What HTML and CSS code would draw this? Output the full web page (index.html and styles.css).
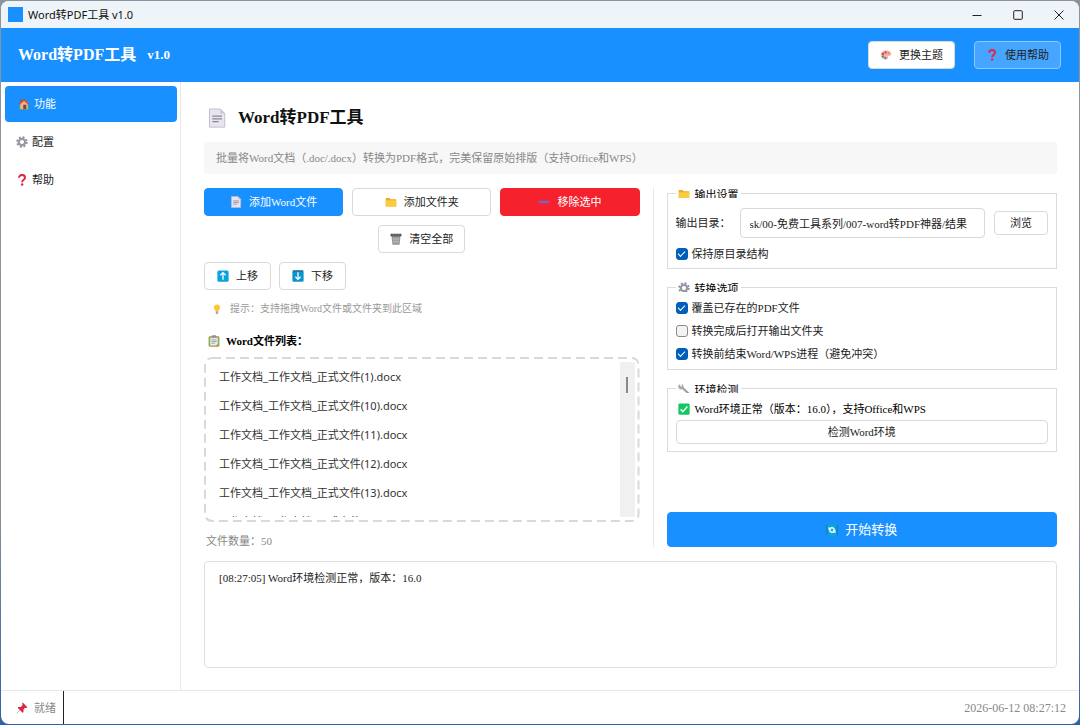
FILE: index.html
```
<!DOCTYPE html>
<html lang="zh-CN">
<head>
    <meta charset="UTF-8">
    <meta name="viewport" content="width=device-width, initial-scale=1.0">
    <link rel="stylesheet" href="styles.css">
    <title>Word转PDF工具 v1.0</title>
</head>
<body>
    <!-- icon sprite -->
    <svg class="sprite" aria-hidden="true">
      <symbol id="i-home" viewBox="0 0 16 16">
        <path d="M2 9h12v6H2z" fill="#6fae3c"/>
        <path d="M3 6l5-4 5 4v9H3z" fill="#e8b48a"/>
        <path d="M8 1L1 8l1 1 6-5 6 5 1-1z" fill="#d9472b"/>
        <path d="M3 2h2v4H3z" fill="#a8502f"/>
        <path d="M7 9h4v6H7z" fill="#7a4a34"/>
      </symbol>
      <symbol id="i-gear" viewBox="0 0 16 16">
        <circle cx="8" cy="8" r="6.4" fill="none" stroke="#8d8f9b" stroke-width="2.4" stroke-dasharray="2.6 2.43"/>
        <circle cx="8" cy="8" r="4.2" fill="none" stroke="#9799a6" stroke-width="3"/>
      </symbol>
      <symbol id="i-question" viewBox="0 0 16 16">
        <path d="M4 5c0-5 8-5 8 0 0 3-3.800 2.500-3.800 6" fill="none" stroke="#e5253d" stroke-width="2.600"/>
        <circle cx="8.200" cy="14" r="1.600" fill="#e5253d"/>
      </symbol>
      <symbol id="i-palette" viewBox="0 0 16 16">
        <path d="M8 2c5 0 7.500 3 7 5.500-.5 2-4 .5-4.500 2.500-.3 2 1 4-2.500 4C4 14 1 11.500 1 8s3-6 7-6z" fill="#f3b3a4"/>
        <circle cx="4" cy="6.500" r="1.500" fill="#e5253d"/>
        <circle cx="4" cy="10" r="1.500" fill="#3a9b6c"/>
        <circle cx="7.500" cy="4.500" r="1.500" fill="#b0408c"/>
        <circle cx="7" cy="12" r="1.400" fill="#3f6fd0"/>
        <circle cx="11.500" cy="5.500" r="1.400" fill="#f0894b"/>
      </symbol>
      <symbol id="i-doc" viewBox="0 0 16 16">
        <path d="M2 .8h8.700l3.500 3.500v11H2z" fill="#e9e5f0" stroke="#c5bfce" stroke-width=".8"/>
        <path d="M10.700 .8v3.500h3.500z" fill="#c9c3d4"/>
        <path d="M4.300 6.500h7.700M4.300 8.700h7.700M4.300 10.900h5" stroke="#8c8598" stroke-width="1"/>
      </symbol>
      <symbol id="i-folder" viewBox="0 0 16 16">
        <path d="M1 2.500h5l1.500 1.700H15V14H1z" fill="#eda91f"/>
        <path d="M1 5.500h14V14H1z" fill="#fccb40"/>
      </symbol>
      <symbol id="i-minus" viewBox="0 0 16 16">
        <path d="M1 6.200h14v3.600H1z" fill="#7d62c4"/>
      </symbol>
      <symbol id="i-trash" viewBox="0 0 16 16">
        <path d="M2 4h12l-1.300 11.500H3.300z" fill="#8f8f8f"/>
        <path d="M5 5l.5 9.500M8 5v9.500M11 5l-.5 9.500M3 8h10M3.500 11.500h9" stroke="#c9c9c9" stroke-width=".8"/>
        <path d="M.8 1h14.400v3.200H.8z" fill="#4c4c4c"/>
        <path d="M2.500 2.500h11" stroke="#a0a0a0" stroke-width=".8"/>
      </symbol>
      <symbol id="i-up" viewBox="0 0 16 16">
        <rect x=".5" y=".5" width="15" height="15" rx="2" fill="#0ba3dd"/>
        <path d="M8 13V4M4.500 7L8 3.500 11.500 7" fill="none" stroke="#fff" stroke-width="1.700"/>
      </symbol>
      <symbol id="i-down" viewBox="0 0 16 16">
        <rect x=".5" y=".5" width="15" height="15" rx="2" fill="#0b95d0"/>
        <path d="M1 .5h14v1.500H1z" fill="#35617a"/>
        <path d="M8 3v9M4.500 9L8 12.500 11.500 9" fill="none" stroke="#fff" stroke-width="1.700"/>
      </symbol>
      <symbol id="i-bulb" viewBox="0 0 16 16">
        <path d="M8 2c2.600 0 4.200 1.800 4.200 4S10.200 9 10 11H6C5.800 9 3.800 8.200 3.800 6S5.400 2 8 2z" fill="#fbc92f"/>
        <path d="M6.300 11h3.400v3L8 15l-1.700-1z" fill="#a9a5b0"/>
      </symbol>
      <symbol id="i-clipboard" viewBox="0 0 16 16">
        <rect x="1" y="1.500" width="14" height="14" rx="1.500" fill="#c08a4a"/>
        <path d="M1 3v11.500h1.500V3zM13.500 3v11.500H15V3z" fill="#7cba4d"/>
        <path d="M3 3.500h10v8.500L10.500 14H3z" fill="#e8eef0"/>
        <path d="M4.500 6.500h7M4.500 8.700h7M4.500 11h5" stroke="#6d9aa0" stroke-width="1"/>
        <rect x="5" y=".3" width="6" height="3" rx="1" fill="#8a8f96"/>
      </symbol>
      <symbol id="i-wrench" viewBox="0 0 16 16">
        <path d="M5.500 6l8.500 8" stroke="#9c9ca6" stroke-width="2.800" stroke-linecap="round"/>
        <path d="M2 1.500a3.800 3.800 0 1 0 5.500 4.700C8 4 6.500 1.500 4.500 1.300L5.500 4 4 5z" fill="#a9a9b3"/>
      </symbol>
      <symbol id="i-check" viewBox="0 0 16 16">
        <rect x=".5" y=".5" width="15" height="15" rx="1.500" fill="#10c95e"/>
        <path d="M3.500 8.500l3 3L12.500 4.800" fill="none" stroke="#fff" stroke-width="1.900"/>
      </symbol>
      <symbol id="i-refresh" viewBox="0 0 16 16">
        <rect x=".5" y=".5" width="15" height="15" rx="1.500" fill="#08a7d8"/>
        <path d="M.5 1h1.300v14H.5zM14.200 1h1.300v14h-1.300z" fill="#2470a8"/>
        <path d="M4.800 6.500c1.500-2.500 6-2 6.400 1.500M11.200 9.500c-1.500 2.500-6 2-6.400-1.500" fill="none" stroke="#fff" stroke-width="1.900"/>
        <path d="M3.300 3.500v4.300h4.200zM12.700 12.500V8.200H8.500z" fill="#fff"/>
      </symbol>
      <symbol id="i-pin" viewBox="0 0 16 16">
        <path d="M6 10l-5 5" stroke="#b7b9c4" stroke-width="1.300"/>
        <path d="M9 .8l6.200 6.200-1.500 1-1.700-.5-2 2.500v3.500l-1.200.8L2.200 7.700 3 6.500h3.500L8.800 4 8.200 2z" fill="#e0243f"/>
      </symbol>
    </svg>

    <div class="window">
      <div class="titlebar">
        <span class="titlebar-logo"></span>
        <span class="titlebar-text">Word转PDF工具 v1.0</span>
        <div class="titlebar-controls">
          <button class="win-btn" type="button" aria-label="最小化">
            <svg viewBox="0 0 10 10"><path d="M.5 5.500h9"/></svg>
          </button>
          <button class="win-btn" type="button" aria-label="最大化">
            <svg viewBox="0 0 10 10"><rect x=".7" y=".7" width="8.600" height="8.600" rx="1"/></svg>
          </button>
          <button class="win-btn" type="button" aria-label="关闭">
            <svg viewBox="0 0 10 10"><path d="M.5 .5l9 9M9.500 .5l-9 9"/></svg>
          </button>
        </div>
      </div>

      <header class="header">
        <span class="header-title">Word转PDF工具</span>
        <span class="header-version">v1.0</span>
        <div class="header-actions">
          <button class="btn btn-fixed" type="button"><svg class="icon"><use href="#i-palette"/></svg>更换主题</button>
          <button class="btn btn-fixed btn-ghost" type="button"><svg class="icon"><use href="#i-question"/></svg>使用帮助</button>
        </div>
      </header>

      <div class="body">
        <nav class="sidebar">
          <a class="nav-item active" href="#"><svg class="icon"><use href="#i-home"/></svg>功能</a>
          <a class="nav-item" href="#"><svg class="icon"><use href="#i-gear"/></svg>配置</a>
          <a class="nav-item" href="#"><svg class="icon"><use href="#i-question"/></svg>帮助</a>
        </nav>

        <main class="main">
          <h1 class="page-title"><svg class="icon icon-lg"><use href="#i-doc"/></svg>Word转PDF工具</h1>
          <p class="page-desc">批量将Word文档（.doc/.docx）转换为PDF格式，完美保留原始排版（支持Office和WPS）</p>

          <div class="workspace">
            <section class="files">
              <div class="toolbar">
                <button class="btn btn-primary" type="button"><svg class="icon"><use href="#i-doc"/></svg>添加Word文件</button>
                <button class="btn" type="button"><svg class="icon"><use href="#i-folder"/></svg>添加文件夹</button>
                <button class="btn btn-danger" type="button"><svg class="icon"><use href="#i-minus"/></svg>移除选中</button>
              </div>
              <div class="toolbar-center">
                <button class="btn btn-fixed" type="button"><svg class="icon"><use href="#i-trash"/></svg>清空全部</button>
              </div>
              <div class="toolbar-move">
                <button class="btn" type="button"><svg class="icon"><use href="#i-up"/></svg>上移</button>
                <button class="btn" type="button"><svg class="icon"><use href="#i-down"/></svg>下移</button>
              </div>
              <p class="tip"><svg class="icon"><use href="#i-bulb"/></svg>提示：支持拖拽Word文件或文件夹到此区域</p>
              <h2 class="list-title"><svg class="icon"><use href="#i-clipboard"/></svg>Word文件列表：</h2>
              <div class="file-box">
                <svg class="file-box-frame" aria-hidden="true"><rect x="1" y="1" rx="7"/></svg>
                <ul class="file-list">
                  <li>工作文档_工作文档_正式文件(1).docx</li>
                  <li>工作文档_工作文档_正式文件(10).docx</li>
                  <li>工作文档_工作文档_正式文件(11).docx</li>
                  <li>工作文档_工作文档_正式文件(12).docx</li>
                  <li>工作文档_工作文档_正式文件(13).docx</li>
                  <li>工作文档_工作文档_正式文件(14).docx</li>
                </ul>
                <div class="scroll-track"><div class="scroll-thumb"></div></div>
              </div>
              <p class="file-count">文件数量：50</p>
            </section>

            <div class="divider"></div>

            <section class="settings">
              <fieldset class="group group-output">
                <legend><svg class="icon"><use href="#i-folder"/></svg>输出设置</legend>
                <div class="output-row">
                  <label for="output-dir">输出目录：</label>
                  <input class="text-input" id="output-dir" type="text" value="sk/00-免费工具系列/007-word转PDF神器/结果">
                  <button class="btn btn-small" type="button">浏览</button>
                </div>
                <label class="check"><input type="checkbox" checked>保持原目录结构</label>
              </fieldset>

              <fieldset class="group">
                <legend><svg class="icon"><use href="#i-gear"/></svg>转换选项</legend>
                <label class="check"><input type="checkbox" checked>覆盖已存在的PDF文件</label>
                <label class="check"><input type="checkbox">转换完成后打开输出文件夹</label>
                <label class="check"><input type="checkbox" checked>转换前结束Word/WPS进程（避免冲突）</label>
              </fieldset>

              <fieldset class="group group-env">
                <legend><svg class="icon"><use href="#i-wrench"/></svg>环境检测</legend>
                <p class="env-status"><svg class="icon"><use href="#i-check"/></svg>Word环境正常（版本：16.0），支持Office和WPS</p>
                <button class="btn btn-small" type="button">检测Word环境</button>
              </fieldset>

              <button class="btn btn-primary btn-start" type="button"><svg class="icon"><use href="#i-refresh"/></svg>开始转换</button>
            </section>
          </div>

          <textarea class="log" aria-label="日志" readonly>[08:27:05] Word环境检测正常，版本：16.0</textarea>
        </main>
      </div>

      <footer class="statusbar">
        <span class="status"><svg class="icon"><use href="#i-pin"/></svg>就绪</span>
        <time class="clock">2026-06-12 08:27:12</time>
      </footer>
    </div>
</body>
</html>
```

FILE: styles.css
```
* {
  box-sizing: border-box;
}
html,body {
  height: 100%;
  margin: 0;
  padding: 0;
}
body {
  padding: 1px;
  background: linear-gradient(#8a94a0 0%, #8a9098 70%, #2f62a8 100%);
  color: #222;
  font-family: "Liberation Serif", "Noto Sans CJK SC", serif;
  font-size: 11px;
  line-height: 16px;
}
h1,h2,p,ul {
  margin: 0;
  padding: 0;
}
button,input,textarea {
  font: inherit;
  color: inherit;
}
.sprite {
  display: none;
}
.icon {
  flex: none;
  width: 12px;
  height: 12px;
}
.icon-lg {
  width: 20px;
  height: 20px;
}

.window {
  display: flex;
  flex-direction: column;
  height: 100%;
  border-radius: 8px;
  background-color: #fff;
  overflow: hidden;
}

/* title bar */
.titlebar {
  display: flex;
  align-items: center;
  height: 27px;
  padding-left: 7px;
  background-color: #eff4f9;
  color: #111;
  font-family: "Noto Sans", "Noto Sans CJK SC", sans-serif;
}
.titlebar-logo {
  width: 15px;
  height: 15px;
  margin-right: 5px;
  background-color: #1890ff;
}
.titlebar-controls {
  display: flex;
  margin-left: auto;
}
.win-btn {
  display: flex;
  align-items: center;
  justify-content: center;
  width: 41px;
  height: 27px;
  padding: 0;
  border: 0;
  background: none;
}
.win-btn svg {
  width: 10px;
  height: 10px;
  fill: none;
  stroke: #222;
  stroke-width: 1;
}

/* header */
.header {
  display: flex;
  align-items: center;
  height: 54px;
  padding: 0 18px 0 17px;
  background-color: #1890ff;
  color: #fff;
}
.header-title {
  font-size: 16px;
  font-weight: bold;
}
.header-version {
  margin-left: 11px;
  font-size: 13px;
  font-weight: bold;
}
.header-actions {
  display: flex;
  gap: 19px;
  margin-left: auto;
}

/* buttons */
.btn {
  display: flex;
  align-items: center;
  justify-content: center;
  gap: 7px;
  height: 28px;
  padding: 0 12px;
  border: 1px solid #d9d9d9;
  border-radius: 4px;
  background-color: #fff;
  color: #222;
  white-space: nowrap;
}
.btn-fixed {
  width: 87px;
}
.btn-primary {
  border-color: #1890ff;
  background-color: #1890ff;
  color: #fff;
}
.btn-danger {
  border-color: #f5222d;
  background-color: #f5222d;
  color: #fff;
}
.btn-ghost {
  border-color: #8cc8ff;
  background-color: #46a6ff;
}
.btn-small {
  height: 24px;
}

/* sidebar */
.body {
  display: flex;
  flex: 1;
  min-height: 0;
}
.sidebar {
  display: flex;
  flex-direction: column;
  gap: 2px;
  flex: none;
  width: 180px;
  padding: 4px 3px 4px 4px;
  border-right: 1px solid #e8e8e8;
}
.nav-item {
  display: flex;
  align-items: center;
  gap: 4px;
  height: 36px;
  padding-left: 11px;
  border-radius: 4px;
  color: #222;
  text-decoration: none;
}
.nav-item.active {
  padding-left: 13px;
  background-color: #1890ff;
  color: #fff;
}

/* main */
.main {
  display: flex;
  flex-direction: column;
  flex: 1;
  min-width: 0;
  padding: 24px 22px 22px 23px;
}
.page-title {
  display: flex;
  align-items: center;
  gap: 11px;
  padding-left: 3px;
  color: #111;
  font-size: 17px;
  line-height: 24px;
}
.page-desc {
  margin-top: 12px;
  padding: 8px 12px;
  border-radius: 4px;
  background-color: #f7f7f7;
  color: #888;
}
.workspace {
  display: grid;
  grid-template-columns: minmax(0, 29fr) 1px minmax(0, 26fr);
  column-gap: 13px;
  margin: 14px 0;
}
.divider {
  background-color: #e8e8e8;
}
.files {
  display: flex;
  flex-direction: column;
}
.toolbar {
  display: grid;
  grid-template-columns: repeat(3, minmax(0, 1fr));
  gap: 9px;
}
.toolbar-center {
  display: flex;
  justify-content: center;
  margin-top: 9px;
}
.toolbar-move {
  display: flex;
  gap: 8px;
  margin-top: 9px;
}
.tip {
  display: flex;
  align-items: center;
  gap: 7px;
  margin-top: 11px;
  padding-left: 7px;
  color: #999;
  font-size: 10px;
}
.list-title {
  display: flex;
  align-items: center;
  gap: 6px;
  margin-top: 16px;
  padding-left: 4px;
  color: #000;
  font-size: 11px;
}
.file-box {
  position: relative;
  display: flex;
  height: 165px;
  margin-top: 8px;
  padding: 5px;
}
.file-box-frame {
  position: absolute;
  inset: 0;
  width: 100%;
  height: 100%;
  pointer-events: none;
}
.file-box-frame rect {
  width: calc(100% - 2px);
  height: calc(100% - 2px);
  fill: none;
  stroke: #d9d9d9;
  stroke-width: 2;
  stroke-dasharray: 9 5;
}
.file-list {
  flex: 1;
  overflow: hidden;
  list-style: none;
  color: #333;
  font-family: "Noto Sans", "Noto Sans CJK SC", sans-serif;
}
.file-list li {
  height: 29px;
  padding-left: 10px;
  line-height: 29px;
}
.scroll-track {
  width: 15px;
  border-radius: 2px;
  background-color: #f0f0f0;
}
.scroll-thumb {
  width: 2px;
  height: 16px;
  margin: 15px auto 0;
  background-color: #8a8a8a;
}
.file-count {
  margin-top: 13px;
  padding-left: 2px;
  color: #888;
  line-height: 12px;
}

/* settings */
.settings {
  display: flex;
  flex-direction: column;
  gap: 13px;
}
.group {
  display: flex;
  flex-direction: column;
  gap: 7px;
  min-width: 0;
  margin: 0;
  padding: 8px 8px 7px;
  border: 1px solid #dcdcdc;
}
.group legend {
  display: flex;
  align-items: flex-start;
  gap: 5px;
  height: 10px;
  padding: 0 2px;
  overflow: hidden;
  color: #000;
  line-height: 14px;
}
.group-output {
  gap: 8px;
  padding: 10px 8px 6px;
}
.group-env {
  gap: 3px;
}
.output-row {
  display: flex;
  align-items: center;
  gap: 9px;
}
.text-input {
  flex: 1;
  min-width: 0;
  height: 30px;
  padding: 0 9px;
  border: 1px solid #d9d9d9;
  border-radius: 4px;
  background-color: #fff;
}
.output-row .btn {
  width: 54px;
}
.check {
  display: flex;
  align-items: center;
  gap: 4px;
}
.check input {
  display: grid;
  place-items: center;
  width: 12px;
  height: 12px;
  margin: 0;
  border: 1px solid #8a8a8a;
  border-radius: 3px;
  background-color: #f3f3f3;
  appearance: none;
}
.check input:checked {
  border-color: #005fb8;
  background-color: #005fb8;
}
.check input:checked::after {
  content: '';
  width: 6px;
  height: 3px;
  margin-bottom: 2px;
  border: solid #fff;
  border-width: 0 0 1px 1px;
  transform: rotate(-45deg);
}
.env-status {
  display: flex;
  align-items: center;
  gap: 5px;
  padding-left: 2px;
  color: #000;
}
.btn-start {
  height: 35px;
  margin-top: auto;
  font-size: 13px;
}

.log {
  flex: 1;
  min-height: 60px;
  padding: 8px 14px;
  border: 1px solid #e0e0e0;
  border-radius: 4px;
  background-color: #fff;
  resize: none;
}

/* status bar */
.statusbar {
  display: flex;
  align-items: center;
  justify-content: space-between;
  height: 34px;
  padding-right: 13px;
  border-top: 1px solid #e8e8e8;
  color: #888;
}
.status {
  display: flex;
  align-items: center;
  gap: 6px;
  height: 100%;
  padding: 0 7px 0 15px;
  border-right: 1px solid #222;
}
.clock {
  font-size: 12px;
}
```
